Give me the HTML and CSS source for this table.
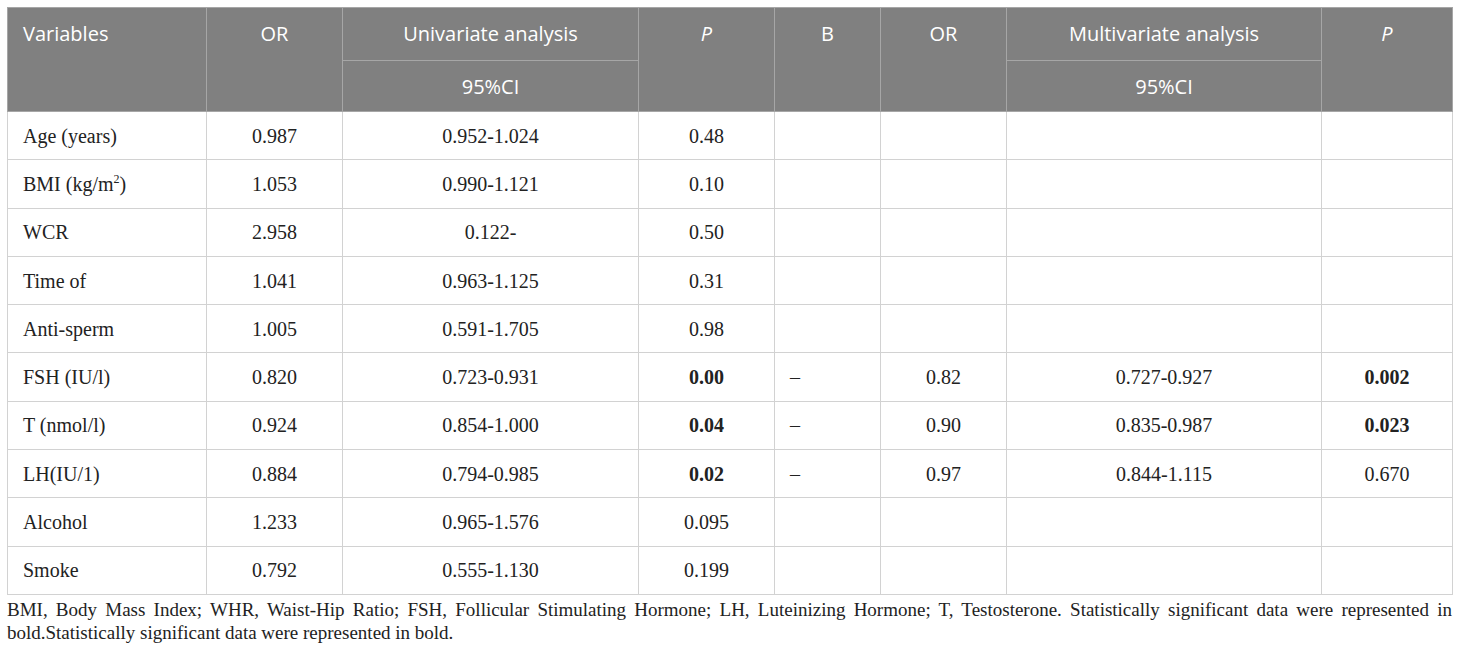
FILE: index.html
```html
<!doctype html>
<html>
<head>
    <meta charset="utf-8"/>
    <title>Logistic regression</title>
    <link rel="stylesheet" href="styles.css">
</head>
<body>
    <div id="wrap">
        <table class="results">
            <colgroup>
                <col class="c-var">
                <col class="c-or">
                <col class="c-ci">
                <col class="c-p">
                <col class="c-b">
                <col class="c-or2">
                <col class="c-ci2">
                <col class="c-p2">
            </colgroup>
            <thead>
                <tr class="h1">
                    <th rowspan="2" class="left">Variables</th>
                    <th rowspan="2">OR</th>
                    <th>Univariate analysis</th>
                    <th rowspan="2"><i>P</i></th>
                    <th rowspan="2">B</th>
                    <th rowspan="2">OR</th>
                    <th>Multivariate analysis</th>
                    <th rowspan="2"><i>P</i></th>
                </tr>
                <tr class="h2">
                    <th>95%CI</th>
                    <th>95%CI</th>
                </tr>
            </thead>
            <tbody>
                <tr><td class="left">Age (years)</td><td>0.987</td><td>0.952-1.024</td><td>0.48</td><td class="left"></td><td></td><td></td><td></td></tr>
                <tr><td class="left">BMI (kg/m<sup>2</sup>)</td><td>1.053</td><td>0.990-1.121</td><td>0.10</td><td class="left"></td><td></td><td></td><td></td></tr>
                <tr><td class="left">WCR</td><td>2.958</td><td>0.122-</td><td>0.50</td><td class="left"></td><td></td><td></td><td></td></tr>
                <tr><td class="left">Time of</td><td>1.041</td><td>0.963-1.125</td><td>0.31</td><td class="left"></td><td></td><td></td><td></td></tr>
                <tr><td class="left">Anti-sperm</td><td>1.005</td><td>0.591-1.705</td><td>0.98</td><td class="left"></td><td></td><td></td><td></td></tr>
                <tr><td class="left">FSH (IU/l)</td><td>0.820</td><td>0.723-0.931</td><td><b>0.00</b></td><td class="left">&ndash;</td><td>0.82</td><td>0.727-0.927</td><td><b>0.002</b></td></tr>
                <tr><td class="left">T (nmol/l)</td><td>0.924</td><td>0.854-1.000</td><td><b>0.04</b></td><td class="left">&ndash;</td><td>0.90</td><td>0.835-0.987</td><td><b>0.023</b></td></tr>
                <tr><td class="left">LH(IU/1)</td><td>0.884</td><td>0.794-0.985</td><td><b>0.02</b></td><td class="left">&ndash;</td><td>0.97</td><td>0.844-1.115</td><td>0.670</td></tr>
                <tr><td class="left">Alcohol</td><td>1.233</td><td>0.965-1.576</td><td>0.095</td><td class="left"></td><td></td><td></td><td></td></tr>
                <tr><td class="left">Smoke</td><td>0.792</td><td>0.555-1.130</td><td>0.199</td><td class="left"></td><td></td><td></td><td></td></tr>
            </tbody>
        </table>

        <p class="note">BMI, Body Mass Index; WHR, Waist-Hip Ratio; FSH, Follicular Stimulating Hormone; LH, Luteinizing Hormone; T, Testosterone. Statistically significant data were represented in bold.Statistically significant data were represented in bold.</p>
    </div>
</body>
</html>
```

FILE: styles.css
```css
body{
    margin: 0;
    background: #fff;
    font-family: "Liberation Serif", "Times New Roman", serif;
    color: #222;
}

#wrap{
    width: 1445px;
    padding: 7px;
}

.results{
    width: 1445px;
    table-layout: fixed;
    border-collapse: collapse;
    border: 1px solid #cfcfcf;
}

.c-var{ width: 199px; }
.c-or{ width: 136px; }
.c-ci{ width: 296px; }
.c-p{ width: 136px; }
.c-b{ width: 106px; }
.c-or2{ width: 126px; }
.c-ci2{ width: 315px; }
.c-p2{ width: 131px; }

.results th{
    background: #808080;
    color: #fff;
    font-family: "Open Sans", "Liberation Sans", sans-serif;
    font-weight: normal;
    font-size: 20px;
    text-align: center;
    vertical-align: top;
    padding: 12px 15px 0;
    border: 1px solid #a6a6a6;
}

.results th i{
    font-style: italic;
}

.results .h1{
    height: 53px;
}
.results .h2{
    height: 51px;
}
.results .h2 th{
    vertical-align: middle;
    padding-top: 0;
}

.results td{
    height: 47.3px;
    padding: 0 15px;
    font-size: 20px;
    line-height: 24px;
    text-align: center;
    vertical-align: middle;
    border: 1px solid #d2d2d2;
}

.results .left{
    text-align: left;
}

.results sup{
    font-size: 12px;
    line-height: 0;
}

.note{
    margin: 3px 0 0;
    font-size: 19px;
    line-height: 23px;
    text-align: justify;
    color: #222;
}
```
